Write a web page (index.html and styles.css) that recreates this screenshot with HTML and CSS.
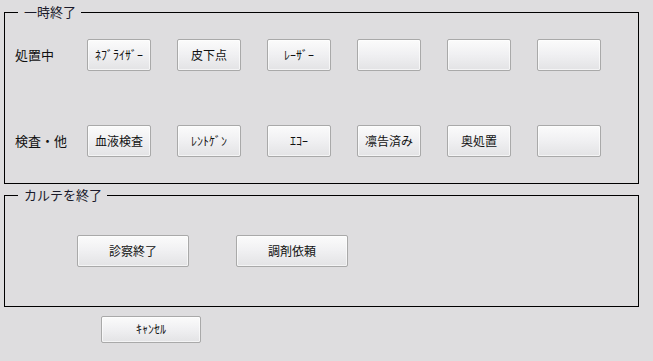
FILE: index.html
```html
<!DOCTYPE html>
<html lang="ja">
<head>
<meta charset="utf-8">
<title>一時終了</title>
<link rel="stylesheet" href="styles.css">
</head>
<body>
<div class="window">
  <div class="group group-pause">
    <span class="legend">一時終了</span>
    <div class="grid">
      <span class="label">処置中</span>
      <button class="btn small">ﾈﾌﾞﾗｲｻﾞｰ</button>
      <button class="btn small">皮下点</button>
      <button class="btn small">ﾚｰｻﾞｰ</button>
      <button class="btn small"></button>
      <button class="btn small"></button>
      <button class="btn small"></button>
      <span class="label">検査・他</span>
      <button class="btn small">血液検査</button>
      <button class="btn small">ﾚﾝﾄｹﾞﾝ</button>
      <button class="btn small">ｴｺｰ</button>
      <button class="btn small">凛告済み</button>
      <button class="btn small">奥処置</button>
      <button class="btn small"></button>
    </div>
  </div>
  <div class="group group-end">
    <span class="legend">カルテを終了</span>
    <div class="row">
      <button class="btn wide">診察終了</button>
      <button class="btn wide">調剤依頼</button>
    </div>
  </div>
  <div class="footer">
    <button class="btn cancel">ｷｬﾝｾﾙ</button>
  </div>
</div>
</body>
</html>
```
FILE: styles.css
```css
html, body {
  margin: 0;
  padding: 0;
  background: #dedddf;
}
body {
  width: 653px;
  height: 361px;
  overflow: hidden;
  font-family: "Noto Sans CJK JP", "Noto Sans", sans-serif;
  color: #111;
}
.window {
  padding: 12px 0 0 4px;
}
.group {
  position: relative;
  box-sizing: border-box;
  width: 635px;
  border: 1px solid #000;
}
.legend {
  position: absolute;
  top: -9px;
  left: 13px;
  padding: 0 5px 0 6px;
  background: #dedddf;
  font-size: 13px;
  line-height: 16px;
  color: #1a1a2a;
}
.group-pause {
  height: 172px;
  padding: 26px 0 0 10px;
}
.grid {
  display: grid;
  grid-template-columns: 46px repeat(6, 64px);
  grid-auto-rows: 32px;
  column-gap: 26px;
  row-gap: 54px;
  align-items: center;
}
.label {
  font-size: 13px;
  line-height: 16px;
  white-space: nowrap;
}
.btn {
  box-sizing: border-box;
  margin: 0;
  padding: 0;
  border: 1px solid #a9a9a9;
  border-radius: 2px;
  background: linear-gradient(to bottom, #fbfbfb 0%, #f1f1f3 45%, #e3e3e5 100%);
  box-shadow: inset 0 0 0 1px rgba(255,255,255,0.6);
  font-family: "Noto Sans CJK JP", "Noto Sans", sans-serif;
  font-size: 12px;
  color: #111;
  line-height: 14px;
}
.small {
  width: 64px;
  height: 32px;
}
.group-end {
  margin-top: 11px;
  height: 112px;
  padding: 39px 0 0 72px;
}
.row {
  display: flex;
  gap: 47px;
}
.wide {
  width: 112px;
  height: 32px;
}
.footer {
  padding: 8px 0 0 97px;
}
.cancel {
  width: 100px;
  height: 27px;
}
```
